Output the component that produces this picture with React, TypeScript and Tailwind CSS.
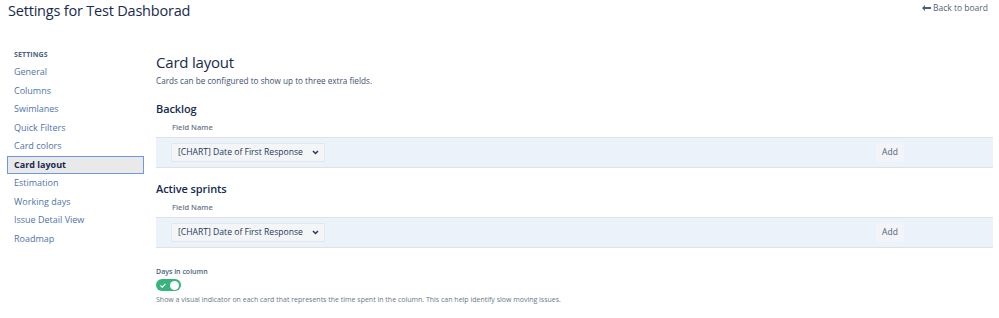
import { useState } from "react";

const NAV = [
  "General",
  "Columns",
  "Swimlanes",
  "Quick Filters",
  "Card colors",
  "Card layout",
  "Estimation",
  "Working days",
  "Issue Detail View",
  "Roadmap",
];

const FIELD = "[CHART] Date of First Response";

function FieldRow({ title }: { title: string }) {
  return (
    <section>
      <h3 className="h-[18px] pt-[2px] text-[11px] font-semibold leading-[16px] tracking-[-0.1px] text-[#172b4d]">
        {title}
      </h3>
      <div className="mt-[1px] h-[19px] pl-[16px] text-[7.5px] font-semibold leading-[19px] text-[#6b778c]">
        Field Name
      </div>
      <div className="flex h-[31px] items-center border-y border-[#dfe1e6] bg-[#ebf2f9] pl-[15px]">
        <div className="flex h-[19px] w-[154px] items-center justify-between rounded-[2px] border border-[#e4e7ec] bg-[#f4f5f7] pl-[6px] pr-[5px] text-[8.6px] whitespace-nowrap text-[#253858]">
          <span>{FIELD}</span>
          <svg width="7" height="5" viewBox="0 0 7 5" fill="none">
            <path d="M1 1l2.5 2.5L6 1" stroke="#253858" strokeWidth="1.5" />
          </svg>
        </div>
        <button className="ml-auto mr-[89px] h-[19px] w-[28px] rounded-[2px] bg-[#f2f4f7] text-[8.5px] text-[#505f79]">
          Add
        </button>
      </div>
    </section>
  );
}

export default function App() {
  const [on, setOn] = useState(true);
  return (
    <div className="h-[318px] w-[999px] overflow-hidden bg-white font-['Open_Sans',sans-serif]">
      {/* Kopfzeile */}
      <header className="flex items-start justify-between pl-[8px] pr-[11px]">
        <h1 className="h-[22px] text-[14.5px] font-normal leading-[22px] tracking-[-0.2px] text-[#172b4d]">
          Settings for Test Dashborad
        </h1>
        <a className="mt-[1px] flex items-center gap-[2px] text-[8.5px] leading-[14px] text-[#505f79]">
          <svg width="9" height="6" viewBox="0 0 9 6">
            <path d="M0 3l3-3v2h6v2H3v2z" fill="#505f79" />
          </svg>
          Back to board
        </a>
      </header>

      <div className="mt-[25px] flex">
        {/* Seitenleiste */}
        <nav className="w-[137px] shrink-0 ml-[7px]">
          <div className="h-[15px] pl-[7px] text-[7px] font-bold leading-[15px] tracking-[0.1px] text-[#505f79]">
            SETTINGS
          </div>
          <ul className="mt-[1px]">
            {NAV.map((n) =>
              n === "Card layout" ? (
                <li
                  key={n}
                  className="h-[18.5px] border border-[#6b9bdc] bg-[#e9e9e9] pl-[6px] text-[9px] font-bold leading-[16.5px] text-[#172b4d]"
                >
                  {n}
                </li>
              ) : (
                <li key={n} className="h-[18.5px] pl-[7px] text-[9px] leading-[18.5px] text-[#4f73a8]">
                  {n}
                </li>
              )
            )}
          </ul>
        </nav>

        {/* Inhalt */}
        <main className="ml-[12px] mr-[6px] flex-1">
          <h2 className="mt-[4px] h-[22px] text-[15px] font-normal leading-[22px] tracking-[-0.2px] text-[#172b4d]">
            Card layout
          </h2>
          <p className="h-[16px] text-[8.2px] leading-[16px] text-[#42526e]">
            Cards can be configured to show up to three extra fields.
          </p>
          <div className="mt-[10px]">
            <FieldRow title="Backlog" />
          </div>
          <div className="mt-[11px]">
            <FieldRow title="Active sprints" />
          </div>
          <div className="mt-[18px]">
            <div className="h-[12px] text-[7px] font-semibold leading-[12px] text-[#505f79]">Days in column</div>
            <button
              onClick={() => setOn(!on)}
              className="mt-[1px] flex h-[12px] w-[25px] items-center justify-between rounded-full bg-[#36b37e] px-[2px]"
            >
              <svg width="6" height="5" viewBox="0 0 6 5" className="ml-[2px]">
                <path d="M0.5 2.5l1.7 1.7L5.5 0.8" stroke="#fff" strokeWidth="1.2" fill="none" />
              </svg>
              <span className="h-[9px] w-[9px] rounded-full bg-white" />
            </button>
            <p className="mt-[3px] text-[7px] leading-[12px] text-[#6b778c]">
              Show a visual indicator on each card that represents the time spent in the column. This can help identify
              slow moving issues.
            </p>
          </div>
        </main>
      </div>
    </div>
  );
}
